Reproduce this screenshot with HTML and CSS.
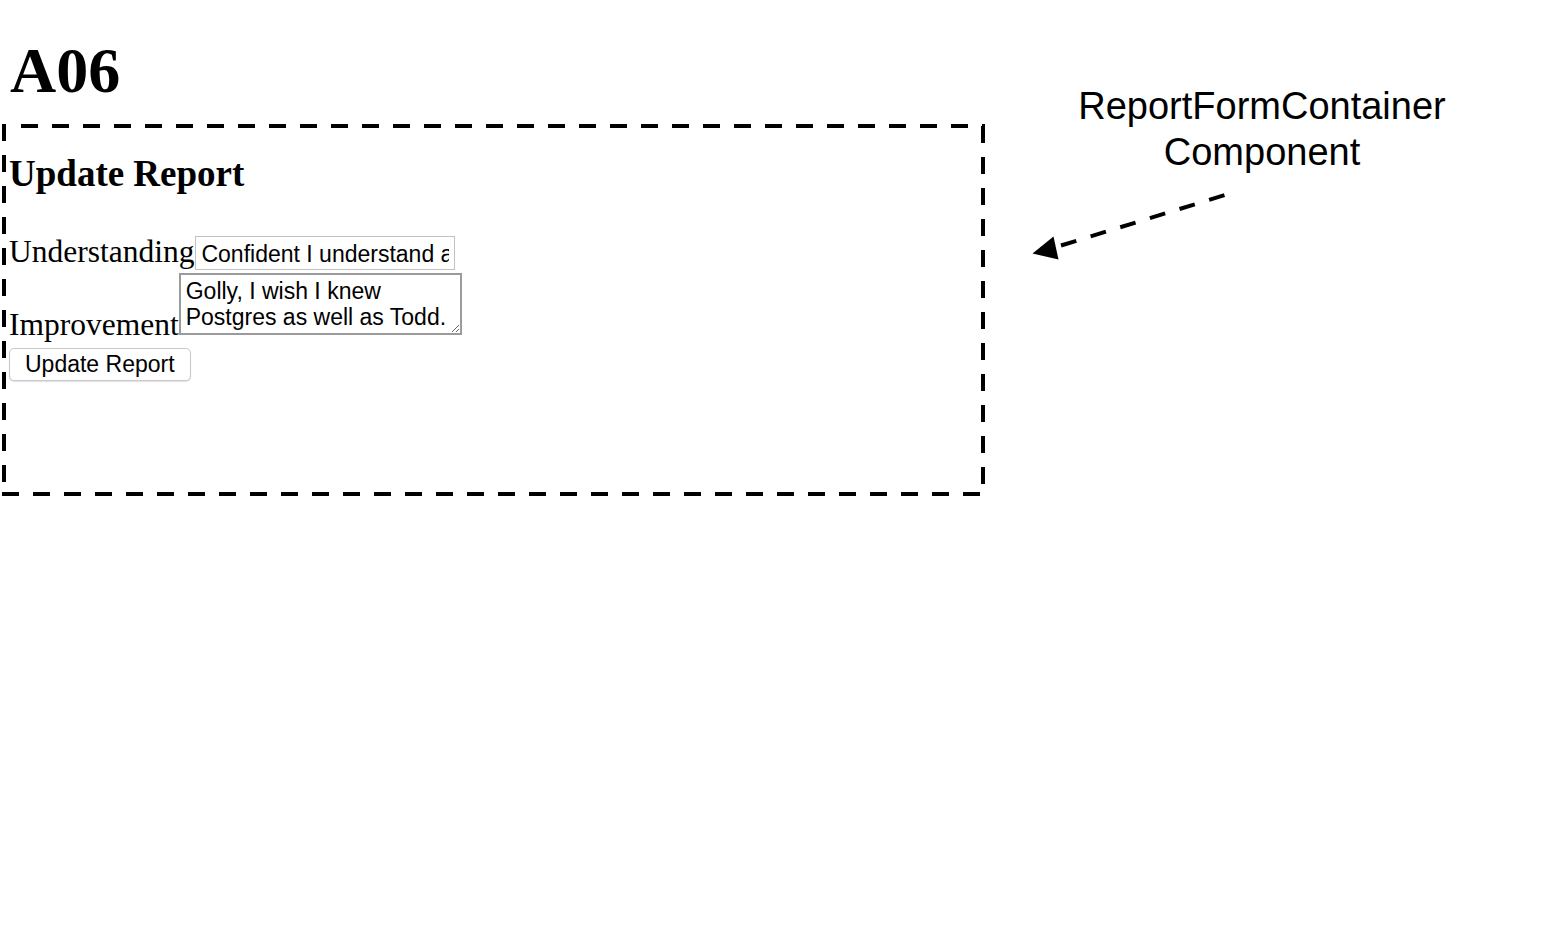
FILE: index.html
```html
<!DOCTYPE html>
<html lang="en">
<head>
    <meta charset="UTF-8">
    <meta name="viewport" content="width=device-width, initial-scale=1.0">
    <title>A06 - Update Report</title>
    <link rel="stylesheet" href="styles.css">
</head>
<body>
    <div class="page">
        <div class="main">
            <h1>A06</h1>

            <div class="report-form-container">
                <h2>Update Report</h2>
                <form class="report-form">
                    <div class="field">
                        <label for="understanding">Understanding</label><input id="understanding" class="text-input" type="text" value="Confident I understand all of this">
                    </div>
                    <div class="field">
                        <label for="improvement">Improvement</label><textarea id="improvement" class="text-area">Golly, I wish I knew Postgres as well as Todd.</textarea>
                    </div>
                    <button type="button" class="submit-btn">Update Report</button>
                </form>
            </div>
        </div>

        <div class="annotation">
            <p class="annotation-label">ReportFormContainer<br>Component</p>
            <svg class="annotation-arrow" width="200" height="72" viewBox="0 0 200 72">
                <line x1="30" y1="55.5" x2="194" y2="5" stroke="#000" stroke-width="4" stroke-dasharray="16 15"/>
                <polygon points="1.5,63.5 22.5,46.5 27.5,69.5" fill="#000"/>
            </svg>
        </div>
    </div>
</body>
</html>
```

FILE: styles.css
```css
* {
    box-sizing: border-box;
}

body {
    margin: 0;
    font-family: "Liberation Serif", "Times New Roman", serif;
    color: #000;
    background: #fff;
}

.page {
    display: flex;
    align-items: flex-start;
}

.main {
    padding-left: 2px;
}

h1 {
    margin: 34px 0 16px 8px;
    font-size: 64px;
    line-height: 74px;
    font-weight: bold;
}

/* long-dash outline marking the component boundary
   (border-style: dashed draws dashes that are too short) */
.report-form-container {
    width: 983px;
    height: 372px;
    padding: 4px 4px 4px 7px;
    background:
        repeating-linear-gradient(90deg, #000 0 17px, transparent 17px 31px) 19px 0 / calc(100% - 19px) 4px no-repeat,
        repeating-linear-gradient(180deg, #000 0 17px, transparent 17px 31px) 0 0 / 4px 100% no-repeat,
        repeating-linear-gradient(180deg, #000 0 17px, transparent 17px 31px) 100% 2px / 4px calc(100% - 2px) no-repeat,
        repeating-linear-gradient(90deg, #000 0 17px, transparent 17px 31px) 0 100% / 100% 4px no-repeat;
}

.report-form-container h2 {
    margin: 25px 0 39px 0;
    font-size: 37px;
    line-height: 42px;
    font-weight: bold;
}

.field {
    font-size: 31.5px;
}

.field label {
    font-family: "Liberation Serif", "Times New Roman", serif;
}

.text-input,
.text-area,
.submit-btn {
    font-family: "Liberation Sans", Helvetica, Arial, sans-serif;
    font-size: 23px;
    color: #000;
}

.text-input {
    width: 260px;
    height: 34px;
    margin: 0 0 0 1px;
    padding: 3px 5px 0 5px;
    border: 1px solid #c2c2c2;
    background: #fff;
    vertical-align: baseline;
}

.text-area {
    width: 283px;
    height: 62px;
    margin: 3px 0 0 0;
    padding: 3px 5px 0 5px;
    border: 2px solid #9b9b9b;
    line-height: 26px;
    overflow: hidden;
    vertical-align: baseline;
}

.submit-btn {
    display: block;
    height: 33px;
    margin: 5px 0 0 0;
    padding: 0 15px;
    border: 1px solid #c9c9c9;
    border-radius: 5px;
    background: #fff;
    box-shadow: 0 1px 1px rgba(0, 0, 0, 0.12);
}

.annotation {
    width: 462px;
    margin: 83px 0 0 46px;
}

.annotation-label {
    margin: 0;
    font-family: "Liberation Sans", Helvetica, Arial, sans-serif;
    font-size: 38px;
    line-height: 46px;
    text-align: center;
}

.annotation-arrow {
    display: block;
    margin-top: 15px;
}
```
